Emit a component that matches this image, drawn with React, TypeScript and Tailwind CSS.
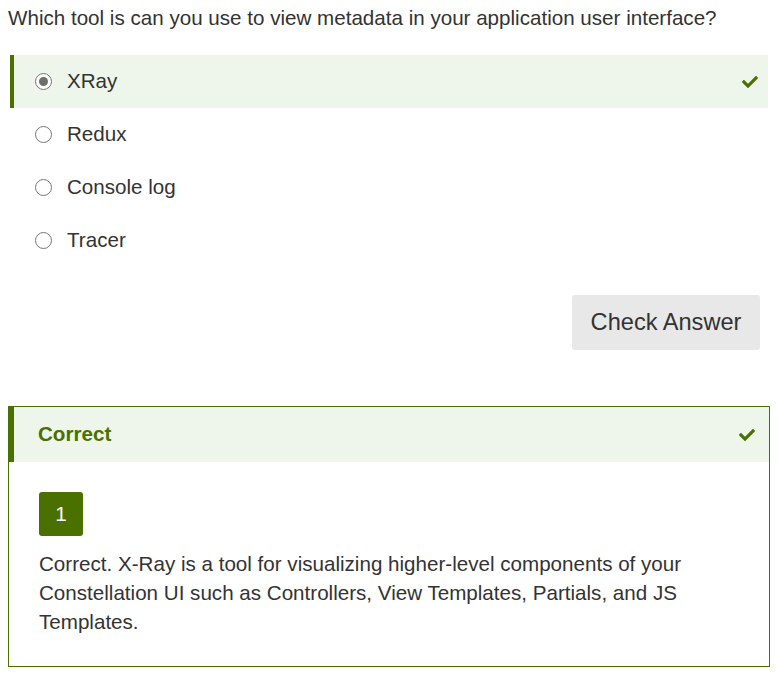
import { FaCheck } from "react-icons/fa";

const options = ["XRay", "Redux", "Console log", "Tracer"];

function Radio({ checked }: { checked: boolean }) {
  return (
    <span className="flex h-[17px] w-[17px] shrink-0 items-center justify-center rounded-full border border-[#767676] bg-white">
      {checked && <span className="h-[9px] w-[9px] rounded-full bg-[#6e6e6e]" />}
    </span>
  );
}

export default function App() {
  return (
    <div className="min-h-screen bg-white font-['Liberation_Sans',Arial,sans-serif] text-[#333]">
      <p className="pl-2 pt-[5px] text-[20.6px] leading-[26px]">
        Which tool is can you use to view metadata in your application user interface?
      </p>

      <div className="mt-[24px] mr-[10px] ml-[10px] flex flex-col">
        {options.map((opt, i) => (
          <div
            key={opt}
            className={
              i === 0
                ? "flex h-[53px] items-center border-l-4 border-[#4a7000] bg-[#eef6ec] pl-[21px] pr-[10px]"
                : "flex h-[53px] items-center border-l-4 border-transparent pl-[21px] pr-[10px]"
            }
          >
            <Radio checked={i === 0} />
            <span className="ml-[15px] flex-1 text-[20.6px]">{opt}</span>
            {i === 0 && <FaCheck className="text-[#4a7000]" size={16} />}
          </div>
        ))}
      </div>

      <div className="mt-[28px] flex justify-end pr-[18px]">
        <button className="h-[55px] w-[188px] rounded-[3px] bg-[#e8e8e8] text-[23.6px] text-[#333]">
          Check Answer
        </button>
      </div>

      <div className="mt-[56px] mr-[8px] ml-[8px] border border-[#4a7000]">
        <div className="flex h-[55px] items-center border-l-[5px] border-[#4a7000] bg-[#eef6ec] pl-[24px] pr-[14px]">
          <span className="flex-1 text-[20.6px] font-bold text-[#4a7000]">Correct</span>
          <FaCheck className="text-[#4a7000]" size={16} />
        </div>
        <div className="px-[30px] pt-[30px] pb-[30px]">
          <div className="flex h-[44px] w-[44px] items-center justify-center rounded-[3px] bg-[#4a7000] text-[20.6px] text-white">
            1
          </div>
          <p className="mt-[13px] text-[20.6px] leading-[29px]">
            Correct. X-Ray is a tool for visualizing higher-level components of your Constellation UI such as Controllers, View Templates, Partials, and JS Templates.
          </p>
        </div>
      </div>
    </div>
  );
}
